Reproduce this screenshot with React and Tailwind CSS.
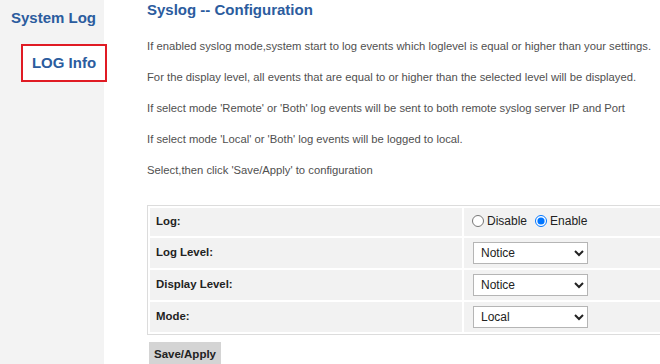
import React, { useState } from "react";

const rows = [
  { label: "Log Level:", value: "Notice", options: ["Emergency", "Alert", "Critical", "Error", "Warning", "Notice", "Informational", "Debugging"] },
  { label: "Display Level:", value: "Notice", options: ["Emergency", "Alert", "Critical", "Error", "Warning", "Notice", "Informational", "Debugging"] },
  { label: "Mode:", value: "Local", options: ["Local", "Remote", "Both"] },
];

const notes = [
  "If enabled syslog mode,system start to log events which loglevel is equal or higher than your settings.",
  "For the display level, all events that are equal to or higher than the selected level will be displayed.",
  "If select mode 'Remote' or 'Both' log events will be sent to both remote syslog server IP and Port",
  "If select mode 'Local' or 'Both' log events will be logged to local.",
  "Select,then click 'Save/Apply' to configuration",
];

const App = () => {
  const [enabled, setEnabled] = useState(true);
  const [values, setValues] = useState(rows.map((r) => r.value));

  return (
    <div className="flex h-[364px] w-[660px] overflow-hidden bg-white font-['Liberation_Sans',Arial,sans-serif]">
      <div className="w-[104px] shrink-0 bg-[#f3f3f3] pt-[8px] relative z-10">
        <div className="pl-[11px] text-[15px] font-bold leading-[20px] text-[#2b5c9e]">System Log</div>
        <div className="ml-[21px] mt-[16px] flex h-[38px] w-[86px] items-center justify-center border-2 border-[#e01b24] bg-white text-[15px] font-bold text-[#2b5c9e]">
          LOG Info
        </div>
      </div>

      <div className="flex-1 pl-[43px] pt-[1px]">
        <h1 className="text-[15px] font-bold leading-[18px] text-[#2b5c9e]">Syslog -- Configuration</h1>
        <div className="mt-[20px] flex flex-col gap-[16px] text-[11.25px] leading-[15px] text-[#505050]">
          {notes.map((n) => (
            <p key={n} className="whitespace-nowrap">{n}</p>
          ))}
        </div>

        <table className="mt-[27px] w-[530px] border-separate border-spacing-[2px] border border-[#dcdcdc] text-[11.4px] text-[#222]">
          <tbody>
            <tr className="h-[28px]">
              <td className="w-[312px] bg-[#f2f2f2] pl-[6px] font-bold">Log:</td>
              <td className="bg-[#f2f2f2] pl-[8px]">
                <label className="inline-flex items-center gap-[3px]">
                  <input type="radio" name="log" checked={!enabled} onChange={() => setEnabled(false)} className="m-0 h-[12px] w-[12px]" />
                  <span className="text-[12px]">Disable</span>
                </label>
                <label className="ml-[8px] inline-flex items-center gap-[3px]">
                  <input type="radio" name="log" checked={enabled} onChange={() => setEnabled(true)} className="m-0 h-[12px] w-[12px]" />
                  <span className="text-[12px]">Enable</span>
                </label>
              </td>
            </tr>
            {rows.map((r, i) => (
              <tr key={r.label} className="h-[30px]">
                <td className="bg-[#f2f2f2] pl-[6px] font-bold">{r.label}</td>
                <td className="bg-[#f2f2f2] pl-[9px]">
                  <select
                    value={values[i]}
                    onChange={(e) => setValues(values.map((v, j) => (j === i ? e.target.value : v)))}
                    className="h-[22px] w-[115px] border border-[#b5b5b5] bg-white pl-[3px] text-[12px] text-[#222]"
                  >
                    {r.options.map((o) => (
                      <option key={o}>{o}</option>
                    ))}
                  </select>
                </td>
              </tr>
            ))}
          </tbody>
        </table>

        <button className="mt-[7px] ml-[2px] h-[26px] bg-[#d4d4d4] px-[5px] text-[11.5px] font-bold text-[#222]">
          Save/Apply
        </button>
      </div>
    </div>
  );
};

export default App;
